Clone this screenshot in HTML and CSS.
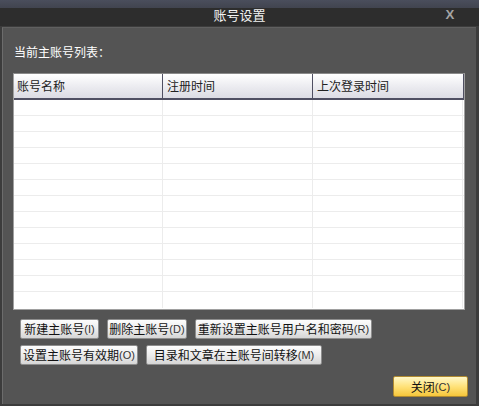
FILE: index.html
```html
<!DOCTYPE html>
<html>
<head>
<meta charset="utf-8">
<link rel="stylesheet" href="styles.css">
</head>
<body>
<div class="win">
  <div class="topband"></div>
  <div class="titlebar">
    <span class="title">账号设置</span>
    <span class="close">X</span>
  </div>
  <div class="body">
    <div class="label">当前主账号列表：</div>
    <div class="list">
      <div class="head">
        <div class="hc">账号名称</div>
        <div class="hc">注册时间</div>
        <div class="hc last">上次登录时间</div>
      </div>
      <div class="rows">
        <div class="row"><div></div><div></div><div></div></div>
        <div class="row"><div></div><div></div><div></div></div>
        <div class="row"><div></div><div></div><div></div></div>
        <div class="row"><div></div><div></div><div></div></div>
        <div class="row"><div></div><div></div><div></div></div>
        <div class="row"><div></div><div></div><div></div></div>
        <div class="row"><div></div><div></div><div></div></div>
        <div class="row"><div></div><div></div><div></div></div>
        <div class="row"><div></div><div></div><div></div></div>
        <div class="row"><div></div><div></div><div></div></div>
        <div class="row"><div></div><div></div><div></div></div>
        <div class="row"><div></div><div></div><div></div></div>
        <div class="row end"><div></div><div></div><div></div></div>
      </div>
    </div>
    <div class="btnrow r1">
      <button class="btn w79">新建主账号<span class="acc">(I)</span></button>
      <button class="btn w80">删除主账号<span class="acc">(D)</span></button>
      <button class="btn w177">重新设置主账号用户名和密码<span class="acc">(R)</span></button>
    </div>
    <div class="btnrow r2">
      <button class="btn w118">设置主账号有效期<span class="acc">(O)</span></button>
      <button class="btn w176">目录和文章在主账号间转移<span class="acc">(M)</span></button>
    </div>
    <div class="footer">
      <button class="btn yellow">关闭<span class="acc">(C)</span></button>
    </div>
  </div>
</div>
</body>
</html>
```
FILE: styles.css
```css
* { box-sizing: border-box; }
html, body { margin: 0; padding: 0; background: #3a3a3a; }
body { font-family: "Noto Sans CJK SC", "Liberation Sans", sans-serif; font-size: 12px; }
.win { width: 479px; height: 406px; display: flex; flex-direction: column; background: #3c3c3c; }
.topband { height: 8px; background: linear-gradient(#4a4e5c, #41444f); }
.titlebar { height: 18px; background: #2d2d2d; position: relative; display: flex; justify-content: center; align-items: flex-start; }
.title { color: #f2f2f2; font-size: 13px; line-height: 14px; margin-top: 0; }
.close { position: absolute; left: 446px; top: 1px; color: #a4a4a4; font-family: "Liberation Sans", sans-serif; font-size: 12px; font-weight: bold; line-height: 12px; transform: scaleX(1.1); }
.body { flex: 1; margin: 1px 3px 2px 2px; background: #545454; border-top: 1px solid #606060; border-left: 1px solid #6c6c6c; display: flex; flex-direction: column; padding: 0 0 0 10px; }
.label { color: #fff; margin-top: 16px; height: 16px; line-height: 16px; padding-left: 1px; }
.list { margin-top: 13px; width: 452px; height: 237px; background: #fff; border: 1px solid #a0a0a0; border-top-color: #8a8a8a; display: flex; flex-direction: column; }
.head { display: flex; height: 26px; width: 450px; background: linear-gradient(#ffffff, #e9e9ee 60%, #dcdce4); border-bottom: 2px solid #4f4f62; border-right: 1px solid #4f4f62; }
.hc { width: 150px; color: #222; line-height: 24px; padding-left: 4px; border-right: 1px solid #4f4f62; font-size: 12px; }
.hc:first-child { width: 149px; padding-left: 3px; }
.hc.last { border-right: none; flex: 1; }
.rows { display: flex; flex-direction: column; }
.row { display: flex; height: 16px; border-bottom: 1px solid #ececec; }
.row.end { border-bottom: none; }
.row div { width: 150px; border-right: 1px solid #ececec; }
.row div:first-child { width: 149px; }
.btnrow { display: flex; gap: 8px; padding-left: 7px; }
.r1 { margin-top: 9px; }
.r2 { margin-top: 6px; }
.btn { height: 20px; padding: 0; font-family: inherit; font-size: 12px; color: #111; border: 1px solid #8d8d8d; border-radius: 2px; background: linear-gradient(#fdfdfd, #ececec 50%, #d6d6d6); display: flex; align-items: center; justify-content: center; line-height: 18px; }
.acc { font-size: 11px; font-family: "Liberation Sans", sans-serif; color: #333; }
.w79 { width: 79px; }
.w80 { width: 80px; }
.w177 { width: 177px; }
.w118 { width: 118px; }
.w176 { width: 176px; }
.footer { display: flex; justify-content: flex-end; margin-top: 11px; padding-right: 8px; }
.yellow { width: 75px; height: 21px; border-color: #b08a30; background: linear-gradient(#fff8c8, #ffe27a 50%, #f6c63a); }
```
